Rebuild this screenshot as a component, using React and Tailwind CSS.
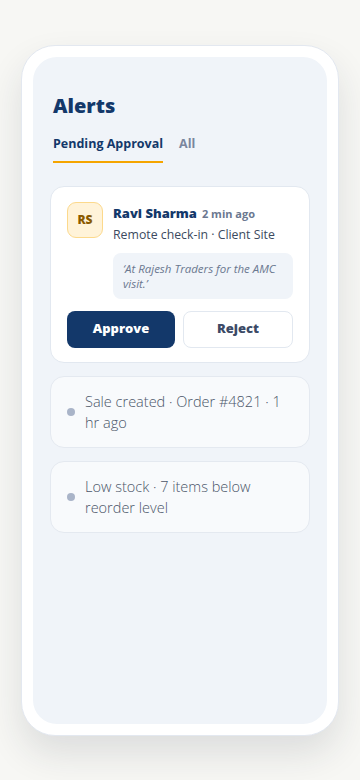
const alerts = [
  { id: 1, text: 'Sale created · Order #4821 · 1 hr ago' },
  { id: 2, text: 'Low stock · 7 items below reorder level' },
]

const App = () => {
  return (
    <div
      className="min-h-[780px] bg-[#f7f7f4] flex justify-center pt-[45px]"
      style={{ fontFamily: '"Open Sans", "Noto Sans", sans-serif' }}
    >
      {/* Phone frame */}
      <div className="w-[318px] h-[691px] bg-white border border-[#e3e8f0] rounded-[34px] p-[11px] shadow-[0_18px_36px_rgba(30,41,59,0.12)]">
        <div className="h-full bg-[#f0f4f9] rounded-[24px] pt-[35px]">
          {/* Header */}
          <div className="px-5">
            <h1 className="text-[20px] leading-[28px] font-extrabold text-[#13386a]">Alerts</h1>
            <div className="flex gap-4 mt-[15px]">
              <button className="text-[12.5px] font-bold text-[#13386a] pb-[7px] border-b-2 border-[#f5a500]">
                Pending Approval
              </button>
              <button className="text-[12.5px] font-bold text-[#7a869e] pb-[7px] border-b-2 border-transparent">
                All
              </button>
            </div>
          </div>

          {/* List */}
          <div className="px-[17px] mt-[23px] flex flex-col gap-[13px]">
            {/* Pending approval card */}
            <div className="bg-white border border-[#e2e8f0] rounded-[14px] px-4 pt-[15px] pb-[14px]">
              <div className="flex gap-[10px]">
                <div className="w-9 h-9 shrink-0 rounded-[9px] bg-[#fff3d9] border border-[#fcd98c] flex items-center justify-center text-[12px] font-extrabold text-[#8a5a00]">
                  RS
                </div>
                <div className="flex-1 min-w-0">
                  <div className="flex items-baseline gap-[5px] mt-[2px]">
                    <span className="text-[13px] font-extrabold text-[#13386a]">Ravi Sharma</span>
                    <span className="text-[11px] font-bold text-[#6b7890]">2 min ago</span>
                  </div>
                  <div className="text-[12.3px] text-[#3c4a60] mt-[3px]">Remote check-in · Client Site</div>
                  <div className="mt-[8px] bg-[#f0f4f9] rounded-[8px] px-[10px] py-[8px] text-[11.5px] leading-[15px] italic text-[#6b7890]">
                    ‘At Rajesh Traders for the AMC visit.’
                  </div>
                </div>
              </div>
              <div className="flex gap-2 mt-3">
                <button className="flex-1 h-[37px] rounded-[8px] bg-[#13386a] text-white text-[13px] font-extrabold">
                  Approve
                </button>
                <button className="flex-1 h-[37px] rounded-[8px] bg-white border border-[#e2e8f0] text-[#3b4a66] text-[13px] font-extrabold">
                  Reject
                </button>
              </div>
            </div>

            {alerts.map((a) => (
              <div
                key={a.id}
                className="bg-[#f8fafc] border border-[#e4e9f0] rounded-[14px] px-4 py-[14px] flex items-center gap-[10px]"
              >
                <span className="w-2 h-2 shrink-0 rounded-full bg-[#a9b4c8]"></span>
                <span className="text-[14.5px] leading-[21px] font-light text-[#4a5568]">{a.text}</span>
              </div>
            ))}
          </div>
        </div>
      </div>
    </div>
  )
}

export default App
